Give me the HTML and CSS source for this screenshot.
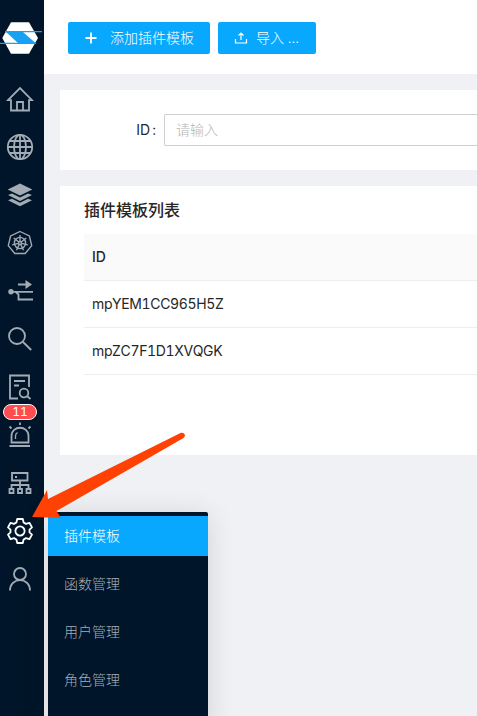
FILE: index.html
```html
<!DOCTYPE html>
<html lang="zh-CN">
<head>
<meta charset="utf-8">
<title>插件模板</title>
<link rel="stylesheet" href="styles.css">
</head>
<body>
<div class="app">
  <aside class="sidebar">
    <svg class="logo" viewBox="0 0 44 75">
      <path fill="#fff" d="M11 22.3H29L38 38L29 53.7H11L2.3 38Z"/>
      <path fill="#18a0f5" d="M6 32H23L36 43.500H18.500Z"/>
      <path stroke="#18a0f5" stroke-width="1.2" d="M5 31.600H42M0 43.300H36"/>
    </svg>
    <nav class="nav">
      <a class="nav-item"><svg viewBox="-14 -14 28 28"><path d="M-12 1.200L0-11L12 1.200H9V11.500H-9V1.200ZM-3 11V3H3V11"/></svg></a>
      <a class="nav-item"><svg viewBox="-14 -14 28 28"><circle r="12.200"/><ellipse rx="6" ry="12.200"/><path d="M0-12V12M-12 0H12M-10.500-6H10.500M-10.500 6H10.500"/></svg></a>
      <a class="nav-item"><svg class="solid" viewBox="-14 -14 28 28"><path d="M0-11.500L12.300-5.500L0 .5L-12.300-5.500ZM-12 0L-8-1.500L0 2.500L8-1.500L12 0L0 6ZM-12 5.300L-8 3.800L0 7.800L8 3.800L12 5.300L0 11.300Z"/></svg></a>
      <a class="nav-item"><svg class="thin" viewBox="-14 -14 28 28"><path d="M0-11.500L9.400-7L11.700 2.700L5.200 10.500H-5.200L-11.700 2.700L-9.400-7Z"/><circle r="5.600"/><circle r="1.500"/><path d="M0-1.500V-8M1.200-1L6.300-5M1.500.3L7.800 1.800M.7 1.400L3.500 7.200M-.7 1.400L-3.500 7.200M-1.500.3L-7.800 1.800M-1.200-1L-6.300-5"/></svg></a>
      <a class="nav-item"><svg viewBox="-14 -14 28 28"><path d="M-9 .8H13M-2-6.500H8M-4.500 .8L-1.500 3.500V8.500H13"/><path class="fill" d="M5.500-11L12-6.500L5.500-2Z"/><circle class="fill" cx="-9" cy=".8" r="2.700"/></svg></a>
      <a class="nav-item"><svg viewBox="-14 -14 28 28"><circle cx="-3" cy="-3" r="8"/><path d="M3 3L11.200 11"/></svg></a>
      <a class="nav-item"><svg viewBox="-14 -14 28 28"><path d="M-2 11.500H-10V-11.500H9V0M-6-6H5M-6-1.500H-1"/><circle cx="4" cy="6" r="4.300"/><path d="M7 9L10.500 12"/></svg></a>
      <a class="nav-item"><svg viewBox="-14 -14 28 28"><path d="M-8.500 7.500V1C-8.500-10 8.500-10 8.500 1V7.500ZM-10.500 11H10M0-12.500V-10M-10.500-8.500L-8.500-6.500M10.500-8.500L8.500-6.500"/><path stroke-width="1.300" d="M-4.500 4V1Q-4.500-1.500-2.500-2.500"/></svg><span class="badge">11</span></a>
      <a class="nav-item"><svg viewBox="-14 -14 28 28"><path d="M-8-10H7.500V-2.500H-8ZM0-2.500V6M-8.500 6V2H8.500V6M-10.500 6H-6.500V10H-10.500ZM-2 6H2V10H-2ZM6.500 6H10.500V10H6.500ZM-5-6H-3"/></svg></a>
      <a class="nav-item active"><svg stroke-linejoin="round" viewBox="-14 -14 28 28"><path d="M-2.800-12H2.800L3.600-8.500L6-7.100L9.400-8.200L12-3.600L9.500-1.400V1.400L12 3.600L9.400 8.200L6 7.100L3.600 8.500L2.800 12H-2.800L-3.600 8.500L-6 7.100L-9.400 8.200L-12 3.600L-9.500 1.400V-1.400L-12-3.600L-9.400-8.200L-6-7.100L-3.600-8.500Z"/><circle r="4.600"/></svg></a>
      <a class="nav-item"><svg viewBox="-14 -14 28 28"><circle cy="-5" r="6"/><path d="M-10 11.500C-10-2.300 10-2.300 10 11.500"/></svg></a>
    </nav>
  </aside>
  <main class="main">
    <header class="toolbar">
      <button class="btn add"><svg viewBox="0 0 14 14"><path stroke-width="1.800" d="M7 1.500V12.500M1.500 7H12.500"/></svg>添加插件模板</button>
      <button class="btn import"><svg viewBox="0 0 14 14"><path d="M1.500 8V12H12.500V8M7 9V2M4.500 4.500L7 2L9.500 4.500"/></svg>导入 ...</button>
    </header>
    <section class="card filter">
      <label class="label">ID<span class="colon">:</span></label>
      <input class="input" placeholder="请输入">
    </section>
    <section class="card list">
      <h2>插件模板列表</h2>
      <div class="row head">ID</div>
      <div class="row">mpYEM1CC965H5Z</div>
      <div class="row">mpZC7F1D1XVQGK</div>
    </section>
  </main>
</div>
<div class="submenu">
  <a class="menu-item selected">插件模板</a>
  <a class="menu-item">函数管理</a>
  <a class="menu-item">用户管理</a>
  <a class="menu-item">角色管理</a>
</div>
<svg class="arrow" viewBox="0 0 160 90"><path fill="#ff4103" d="M2 87L17 60L18 69L150 3.300C153.500 1.500 157 5.500 153.500 8L26.500 81L31 88Z"/></svg>
</body>
</html>
```
FILE: styles.css
```css
* { box-sizing: border-box; }
body {
  margin: 0;
  height: 716px;
  overflow: hidden;
  position: relative;
  background: #f0f1f5;
  color: #262626;
  font: 14px/22px Inter, "Noto Sans CJK SC", sans-serif;
  font-variant-numeric: tabular-nums;
}
.app { display: flex; height: 716px; }
.sidebar { flex: 0 0 44px; background: #001529; }
.logo { display: block; width: 44px; height: 75px; }
.nav-item {
  position: relative;
  display: flex;
  align-items: center;
  height: 48px;
  padding-left: 6px;
  color: #a3acb5;
}
.nav-item.active { color: #fff; }
.nav-item svg {
  width: 28px;
  height: 28px;
  fill: none;
  stroke: currentColor;
  stroke-width: 1.8;
}
.nav-item .thin { stroke-width: 1.35; }
.nav-item .solid, .nav-item .fill { fill: currentColor; stroke: none; }
.badge {
  position: absolute;
  left: 3px;
  top: -7px;
  width: 34px;
  height: 16px;
  border: 1px solid #fff;
  border-radius: 8px;
  background: #ff4d4f;
  color: #fff;
  font-size: 12px;
  line-height: 14px;
  text-align: center;
}
.main { flex: 1; min-width: 0; }
.toolbar {
  display: flex;
  gap: 8px;
  height: 74px;
  padding: 22px 24px;
  background: #fff;
}
.btn {
  display: flex;
  align-items: center;
  height: 32px;
  padding: 0 16px;
  border: 0;
  border-radius: 2px;
  background: #08a8ff;
  color: #fff;
  font: inherit;
  font-weight: 300;
  white-space: nowrap;
}
.btn svg { width: 14px; height: 14px; fill: none; stroke: #fff; stroke-width: 1.2; }
.add { width: 142px; gap: 12px; }
.import { width: 98px; gap: 8px; }
.card { margin: 16px 0 0 16px; background: #fff; }
.filter { display: flex; align-items: center; height: 80px; }
.label { width: 104px; padding-right: 8px; text-align: right; }
.colon { margin-left: 2px; }
.input {
  flex: 1;
  min-width: 0;
  height: 32px;
  padding: 0 11px 2px;
  border: 1px solid #d0d0d0;
  border-right: 0;
  border-radius: 2px 0 0 2px;
  font: inherit;
  font-weight: 300;
}
.input::placeholder { color: #b5b5b5; }
.list { height: 269px; padding: 12px 0 0 24px; }
h2 { height: 36px; margin: 0; font-size: 16px; line-height: 25px; font-weight: 500; }
.row {
  height: 47px;
  padding: 12px 8px;
  border-bottom: 1px solid #eee;
  font-kerning: none;
  letter-spacing: -.36px;
}
.head { background: #fafafa; font-weight: 500; letter-spacing: 0; }
.submenu {
  position: absolute;
  left: 48px;
  top: 512px;
  width: 160px;
  height: 220px;
  padding-top: 4px;
  border-radius: 2px;
  background: #001529;
  box-shadow: 0 3px 28px rgba(0, 0, 0, .13);
}
.menu-item {
  display: block;
  height: 40px;
  margin-bottom: 8px;
  padding-left: 16px;
  color: #a6adb4;
  font-weight: 300;
  line-height: 40px;
}
.selected { background: #08a8ff; color: #fff; }
.arrow { position: absolute; left: 30px; top: 430px; width: 160px; height: 90px; }
```
